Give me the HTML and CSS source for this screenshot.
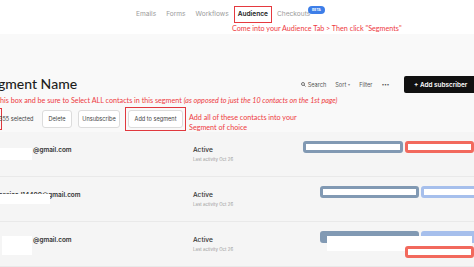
FILE: index.html
```html
<!DOCTYPE html>
<html lang="en">
<head>
    <meta charset="UTF-8">
    <title>Audience - Segment</title>
    <link rel="stylesheet" href="styles.css">
</head>
<body>
    <header class="topbar">
        <nav class="nav">
            <a class="nav-item">Emails</a>
            <a class="nav-item">Forms</a>
            <a class="nav-item">Workflows</a>
            <a class="nav-item active">Audience</a>
            <a class="nav-item">Checkouts<span class="beta">BETA</span></a>
        </nav>
        <p class="note note-nav">Come into your Audience Tab &gt; Then click "Segments"</p>
    </header>

    <main class="page">
        <div class="title-row">
            <h1 class="title">Segment Name</h1>
            <div class="tools">
                <span class="tool">
                    <svg width="5" height="5" viewBox="0 0 10 10"><circle cx="4" cy="4" r="3" fill="none" stroke="#555" stroke-width="1.6"/><path d="M6.3 6.3 9 9" stroke="#555" stroke-width="1.6"/></svg>
                    Search
                </span>
                <span class="tool">Sort <span class="caret">&#9662;</span></span>
                <span class="tool">Filter</span>
                <span class="tool dots">&middot;&middot;&middot;</span>
                <button class="btn-dark">+ Add subscriber</button>
            </div>
        </div>

        <p class="note note-select">Check this box and be sure to Select ALL contacts in this segment <em>(as opposed to just the 10 contacts on the 1st page)</em></p>

        <div class="bulk">
            <span class="check-mark"></span>
            <span class="selected">355 selected</span>
            <button class="btn btn-delete">Delete</button>
            <button class="btn btn-unsub">Unsubscribe</button>
            <span class="marked"><button class="btn btn-add">Add to segment</button></span>
            <p class="note note-add">Add all of these contacts into your<br>Segment of choice</p>
        </div>

        <ul class="list">
            <li class="row">
                <div class="who">
                    <div class="email"><span class="hide hide-a"></span>@gmail.com</div>
                </div>
                <div class="status">
                    <div class="state">Active</div>
                    <div class="seen">Last activity Oct 26</div>
                </div>
                <div class="tags tags-wide">
                    <span class="tag tag-slate" style="width:100px"></span>
                    <span class="tag tag-red" style="width:69px"></span>
                </div>
            </li>
            <li class="row">
                <div class="who">
                    <div class="email email-shift">jessica.l14400@gmail.com<span class="hide hide-b"></span></div>
                </div>
                <div class="status">
                    <div class="state">Active</div>
                    <div class="seen">Last activity Oct 26</div>
                </div>
                <div class="tags">
                    <span class="tag tag-slate" style="width:99px"></span>
                    <span class="tag tag-sky" style="width:60px"></span>
                </div>
            </li>
            <li class="row">
                <div class="who">
                    <div class="email"><span class="hide hide-c"></span>@gmail.com</div>
                </div>
                <div class="status">
                    <div class="state">Active</div>
                    <div class="seen">Last activity Oct 26</div>
                </div>
                <div class="tags tags-stack">
                    <div class="tag-line">
                        <span class="tag tag-slate tag-fill" style="width:99px"></span>
                        <span class="tag tag-sky tag-fill" style="width:60px"></span>
                    </div>
                    <span class="hide hide-d"></span>
                    <div class="tag-line tag-line-end">
                        <span class="tag tag-red" style="width:69px"></span>
                    </div>
                </div>
            </li>
        </ul>
    </main>
</body>
</html>
```

FILE: styles.css
```css
* {
    margin: 0;
    padding: 0;
    box-sizing: border-box;
}

body {
    width: 474px;
    height: 267px;
    overflow: hidden;
    font-family: Inter, 'Liberation Sans', sans-serif;
    background: #f9f9f9;
    color: #333;
}

.topbar {
    position: relative;
    height: 34px;
    background: #fff;
}

.nav {
    display: flex;
    align-items: center;
    gap: 10px;
    padding: 10px 0 0 136px;
}

.nav-item {
    position: relative;
    font-size: 6.6px;
    line-height: 9px;
    color: #9b9b9b;
}

.nav-item.active {
    margin: -4px -5px;
    padding: 3px 3px;
    border: 1.5px solid #e5393f;
    color: #222;
    font-weight: 600;
}

.beta {
    position: absolute;
    top: -4px;
    left: 31px;
    width: 17px;
    height: 8px;
    border-radius: 4px;
    background: #3d7ee8;
    color: #fff;
    font-size: 3.4px;
    font-weight: 700;
    line-height: 8px;
    text-align: center;
}

.note {
    font-family: Lato, 'Open Sans', sans-serif;
    color: #ee3a3f;
    font-size: 7.2px;
    line-height: 10px;
    white-space: nowrap;
}

.note-nav {
    position: absolute;
    left: 232px;
    top: 24px;
}

.page {
    padding-top: 37px;
}

.title-row {
    display: flex;
    align-items: flex-end;
    justify-content: space-between;
    height: 22px;
}

.title {
    margin-left: -17px;
    font-family: Lato, 'Open Sans', sans-serif;
    font-size: 14px;
    font-weight: 500;
    color: #1d1d1d;
    line-height: 19px;
}

.tools {
    display: flex;
    align-items: center;
    gap: 9px;
    margin-right: -12px;
}

.tool {
    display: flex;
    align-items: center;
    gap: 2px;
    font-size: 5.6px;
    color: #555;
}

.caret {
    font-size: 4px;
    color: #888;
}

.dots {
    font-size: 9px;
    font-weight: 700;
    letter-spacing: -0.5px;
    margin-right: 6px;
}

.btn-dark {
    width: 82px;
    height: 17px;
    padding-left: 10px;
    text-align: left;
    border: none;
    border-radius: 2px;
    background: #111;
    color: #fff;
    font-family: inherit;
    font-size: 6.4px;
    font-weight: 600;
}

.note-select {
    margin: 3px 0 0 -24px;
}

.bulk {
    display: flex;
    align-items: center;
    height: 22px;
    margin-top: 2px;
}

.check-mark {
    flex-shrink: 0;
    width: 10px;
    height: 22px;
    margin-left: -8px;
    border: 1.5px solid #e0383e;
}

.selected {
    flex-shrink: 0;
    margin-left: -3px;
    width: 43px;
    font-size: 5.6px;
    color: #444;
    white-space: nowrap;
}

.btn {
    flex-shrink: 0;
    height: 18px;
    padding: 0;
    border: 1px solid #dcdcdc;
    border-radius: 3px;
    background: #fff;
    color: #444;
    font-family: inherit;
    font-size: 5.6px;
    white-space: nowrap;
}

.btn-delete { width: 30px; margin-right: 6px; }
.btn-unsub { width: 42px; margin-right: 5px; }
.btn-add { width: 55px; }

.marked {
    display: flex;
    flex-shrink: 0;
    padding: 2px;
    border: 1.5px solid #e0383e;
}

.note-add {
    margin: 8px 0 0 3px;
}

.list {
    list-style: none;
    margin-top: 2px;
    background: #f5f5f5;
}

.row {
    display: flex;
    height: 45px;
    border-bottom: 1px solid #e9e9e9;
}

.who {
    flex-shrink: 0;
    width: 193px;
    padding-top: 14px;
}

.email {
    position: relative;
    display: flex;
    align-items: flex-start;
    font-size: 6.4px;
    font-weight: 600;
    color: #333;
}

.email-shift {
    margin-left: -3px;
}

.hide {
    display: block;
    flex-shrink: 0;
    background: #fff;
}

.hide-a {
    width: 32px;
    height: 12px;
    margin-top: 2px;
    margin-right: 1px;
}

.hide-b {
    position: absolute;
    left: 0;
    top: 3px;
    width: 53px;
    height: 10px;
}

.hide-c {
    width: 30px;
    height: 19px;
    margin-left: 2px;
    margin-right: 1px;
}

.status {
    flex-shrink: 0;
    width: 110px;
    padding-top: 14px;
}

.state {
    font-size: 6.6px;
    font-weight: 500;
    color: #333;
}

.seen {
    margin-top: 3px;
    font-size: 4.4px;
    color: #999;
}

.tags {
    position: relative;
    flex-shrink: 0;
    display: flex;
    gap: 2px;
    padding: 9px 0 0 17px;
}

.tags-wide {
    padding-left: 0;
}

.tag {
    flex-shrink: 0;
    height: 12px;
    border: 3px solid;
    border-radius: 3px;
    background: #fff;
}

.tag-slate { border-color: #8199b3; }
.tag-red { border-color: #f2695d; }
.tag-sky { border-color: #a6bfec; }

.tag-fill.tag-slate { background: #8199b3; }
.tag-fill.tag-sky { background: #a6bfec; }

.tags-stack {
    flex-direction: column;
    gap: 3px;
}

.tag-line {
    display: flex;
    gap: 2px;
}

.tag-line-end {
    position: relative;
    padding-left: 85px;
}

.hide-d {
    position: absolute;
    left: 24px;
    top: 14px;
    width: 145px;
    height: 15px;
}
```
